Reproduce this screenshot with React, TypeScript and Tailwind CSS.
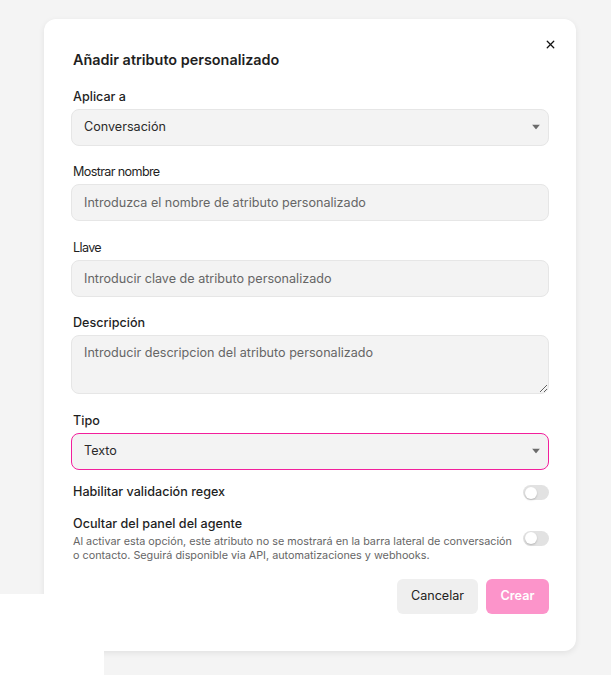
import { X } from "lucide-react";

const font = { fontFamily: "Inter, 'Noto Sans', sans-serif" };

const Caret = () => (
  <svg width="8" height="5" viewBox="0 0 8 5" className="absolute right-[9px] top-1/2 -translate-y-1/2">
    <path d="M0 0h8L4 5z" fill="#6b6b6b" />
  </svg>
);

const Toggle = () => (
  <div className="w-[26px] h-[15px] rounded-full bg-[#e2e2e2] relative shrink-0">
    <div className="absolute left-[1.5px] top-[1.5px] w-[12px] h-[12px] rounded-full bg-white shadow-[0_1px_2px_rgba(0,0,0,0.2)]" />
  </div>
);

const Field = ({
  label,
  tight,
  children,
}: {
  label: string;
  tight?: boolean;
  children: React.ReactNode;
}) => (
  <div className="flex flex-col">
    <label
      className={
        tight
          ? "h-5 leading-5 mb-[2px] text-[12.6px] tracking-[-0.05em] text-[#1f1f1f] pl-[2px]"
          : "h-5 leading-5 mb-[2px] text-[12.6px] font-medium text-[#1f1f1f] pl-[2px]"
      }
    >
      {label}
    </label>
    {children}
  </div>
);

const inputCls =
  "w-full h-[37px] rounded-lg bg-[#f3f3f3] border border-[#e6e6e6] px-3 text-[12.6px] text-[#2a2a2a] placeholder:text-[#666] outline-none";

export default function App() {
  return (
    <div className="relative h-[675px] overflow-hidden bg-[#f4f4f4] pt-[19px] pl-[44px]" style={font}>
      <div className="relative w-[532px] h-[632px] bg-white rounded-xl shadow-[0_2px_6px_rgba(0,0,0,0.08)] px-[27px] pt-[31px]">
        <button className="absolute right-[19px] top-[19px] text-[#111]">
          <X size={13} strokeWidth={2.4} />
        </button>

        <div className="flex flex-col gap-[16.5px]">
          <h2 className="h-5 leading-5 text-[14.4px] font-semibold text-[#1f1f1f] pl-[2px]">
            Añadir atributo personalizado
          </h2>

          <Field label="Aplicar a">
            <div className="relative">
              <div className={inputCls + " flex items-center"}>Conversación</div>
              <Caret />
            </div>
          </Field>

          <Field label="Mostrar nombre" tight>
            <input className={inputCls} placeholder="Introduzca el nombre de atributo personalizado" />
          </Field>

          <Field label="Llave" tight>
            <input className={inputCls} placeholder="Introducir clave de atributo personalizado" />
          </Field>

          <Field label="Descripción">
            <textarea
              className="w-full h-[59px] rounded-lg bg-[#f3f3f3] border border-[#e6e6e6] px-3 py-[7px] text-[12.6px] leading-5 text-[#2a2a2a] placeholder:text-[#666] outline-none block"
              placeholder="Introducir descripcion del atributo personalizado"
            />
          </Field>

          <Field label="Tipo">
            <div className="relative">
              <div className="w-full h-[37px] rounded-lg bg-[#f3f3f3] border border-[#f21f9c] px-3 text-[12.6px] text-[#2a2a2a] flex items-center">
                Texto
              </div>
              <Caret />
            </div>
          </Field>
        </div>

        <div className="mt-[13px] flex items-center justify-between h-5 pl-[2px]">
          <span className="text-[12.6px] font-medium text-[#1f1f1f]">Habilitar validación regex</span>
          <Toggle />
        </div>

        <div className="mt-[11px] flex items-center gap-[6px] pl-[2px]">
          <div className="flex-1">
            <div className="h-5 leading-5 text-[12.6px] font-medium text-[#1f1f1f]">Ocultar del panel del agente</div>
            <p className="mt-[1px] max-w-[442px] text-[10.8px] leading-[14px] text-[#666]">
              Al activar esta opción, este atributo no se mostrará en la barra lateral de conversación o contacto.
              Seguirá disponible via API, automatizaciones y webhooks.
            </p>
          </div>
          <Toggle />
        </div>

        <div className="mt-4 flex justify-end gap-2">
          <button className="h-[35px] w-[81px] rounded-md bg-[#efefef] text-[12.6px] text-[#222]">Cancelar</button>
          <button className="h-[35px] w-[63px] rounded-md bg-[#fc94ca] text-[12.6px] font-semibold text-white">
            Crear
          </button>
        </div>
      </div>

      <div className="absolute left-0 top-[594px] w-[104px] h-[81px] bg-white" />
    </div>
  );
}
